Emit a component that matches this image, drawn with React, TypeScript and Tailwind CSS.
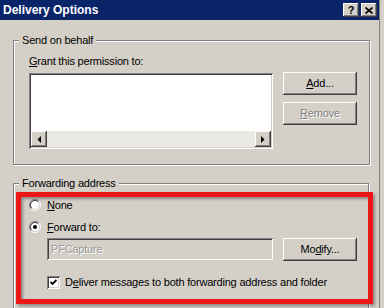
import React from "react";

const raised =
  "shadow-[inset_-1px_-1px_0_#404040,inset_1px_1px_0_#ffffff,inset_-2px_-2px_0_#808080,inset_2px_2px_0_#d4d0c8]";
const sunken =
  "shadow-[inset_1px_1px_0_#808080,inset_-1px_-1px_0_#ffffff,inset_2px_2px_0_#404040,inset_-2px_-2px_0_#d4d0c8]";

function Btn({ children, disabled }: { children: React.ReactNode; disabled?: boolean }) {
  return (
    <div
      className={`w-[74px] h-[23px] flex items-center justify-center bg-[#d4d0c8] ${raised} ${
        disabled ? "text-[#808080] [text-shadow:1px_1px_0_#fff]" : "text-black"
      }`}
    >
      {children}
    </div>
  );
}

function Radio({ checked }: { checked?: boolean }) {
  return (
    <svg width="12" height="12" viewBox="0 0 12 12" className="shrink-0">
      <circle cx="6" cy="6" r="4.5" fill="#fff" />
      <path d="M2.1 9.9 A5.5 5.5 0 0 1 9.9 2.1" fill="none" stroke="#808080" />
      <path d="M9.9 2.1 A5.5 5.5 0 0 1 2.1 9.9" fill="none" stroke="#ffffff" />
      <path d="M2.8 9.2 A4.5 4.5 0 0 1 9.2 2.8" fill="none" stroke="#404040" />
      <path d="M9.2 2.8 A4.5 4.5 0 0 1 2.8 9.2" fill="none" stroke="#d4d0c8" />
      {checked && <circle cx="6" cy="6" r="2" fill="#000" />}
    </svg>
  );
}

function Arrow({ dir }: { dir: "l" | "r" }) {
  return (
    <div className={`w-[16px] h-[16px] flex items-center justify-center bg-[#d4d0c8] ${raised}`}>
      <svg width="4" height="7" viewBox="0 0 4 7">
        {dir === "l" ? <polygon points="4,0 4,7 0.5,3.5" fill="#000" /> : <polygon points="0,0 0,7 3.5,3.5" fill="#000" />}
      </svg>
    </div>
  );
}

export default function App() {
  return (
    <div className="w-[384px] h-[308px] overflow-hidden bg-[#d4d0c8] flex font-['Liberation_Sans',Arial,sans-serif] text-[11px] leading-[13px] tracking-[-0.2px] text-black">
      <div className="w-[379px] flex flex-col">
        {/* title bar */}
        <div className="h-[20px] bg-[#0a246a] flex items-center pl-[3px] pr-[2px] shrink-0">
          <span className="text-white font-bold text-[12px] tracking-normal flex-1">Delivery Options</span>
          <div className={`w-[16px] h-[14px] bg-[#d4d0c8] ${raised} flex items-center justify-center font-bold text-[11px]`}>?</div>
          <div className={`ml-[2px] w-[16px] h-[14px] bg-[#d4d0c8] ${raised} flex items-center justify-center`}>
            <svg width="8" height="7" viewBox="0 0 8 7">
              <path d="M0.5 0.5 L7.5 6.5 M7.5 0.5 L0.5 6.5" stroke="#000" strokeWidth="1.6" />
            </svg>
          </div>
        </div>

        {/* Send on behalf */}
        <fieldset className="shrink-0 mt-[14px] ml-[13px] w-[357px] h-[131px] border border-[#808080] shadow-[1px_1px_0_#fff,inset_1px_1px_0_#fff] pl-[15px] pt-[8px]">
          <legend className="ml-[-10px] px-[3px] bg-[#d4d0c8]">Send on behalf</legend>
          <div className="flex gap-[10px]">
            <div className="w-[244px] flex flex-col">
              <span>
                <u>G</u>rant this permission to:
              </span>
              <div className={`mt-[5px] h-[76px] bg-white ${sunken} p-[2px] flex flex-col`}>
                <div className="flex-1" />
                <div className="flex h-[16px] bg-[#ebe9e4]">
                  <Arrow dir="l" />
                  <div className="flex-1" />
                  <Arrow dir="r" />
                </div>
              </div>
            </div>
            <div className="pt-[17px] flex flex-col gap-[7px]">
              <Btn>
                <span>
                  <u>A</u>dd...
                </span>
              </Btn>
              <Btn disabled>
                <span>
                  <u>R</u>emove
                </span>
              </Btn>
            </div>
          </div>
        </fieldset>

        {/* Forwarding address */}
        <div className="shrink-0 relative mt-[12px] ml-[13px] w-[356px]">
          <fieldset className="h-[140px] border border-[#808080] shadow-[1px_1px_0_#fff,inset_1px_1px_0_#fff] pl-[15px] pt-[4px]">
            <legend className="ml-[-10px] px-[3px] bg-[#d4d0c8]">Forwarding address</legend>
            <div className="h-[22px] flex items-center gap-[6px]">
              <Radio />
              <span>
                <u>N</u>one
              </span>
            </div>
            <div className="h-[22px] flex items-center gap-[6px]">
              <Radio checked />
              <span>
                <u>F</u>orward to:
              </span>
            </div>
            <div className="flex gap-[10px] ml-[18px]">
              <div className={`w-[226px] h-[22px] ${sunken} flex items-center pl-[4px] text-[#9a9a9a] [text-shadow:1px_1px_0_#fff]`}>
                PFCapture
              </div>
              <Btn>
                <span>
                  Mo<u>d</u>ify...
                </span>
              </Btn>
            </div>
            <div className="mt-[15px] ml-[18px] flex items-center gap-[5px]">
              <div className={`w-[13px] h-[13px] bg-white ${sunken} flex items-center justify-center`}>
                <svg width="7" height="7" viewBox="0 0 7 7">
                  <path d="M0.5 3 L2.5 5 L6.5 1" fill="none" stroke="#000" strokeWidth="1.8" />
                </svg>
              </div>
              <span>
                D<u>e</u>liver messages to both forwarding address and folder
              </span>
            </div>
          </fieldset>
          {/* red annotation */}
          <div className="absolute left-[3px] top-[15px] w-[357px] h-[112px] border-[5px] border-[#ee1616] pointer-events-none shadow-[2px_2px_3px_rgba(0,0,0,0.35),inset_2px_2px_3px_rgba(0,0,0,0.35)]" />
        </div>
      </div>
      <div className="w-px bg-[#808080]" />
    </div>
  );
}
